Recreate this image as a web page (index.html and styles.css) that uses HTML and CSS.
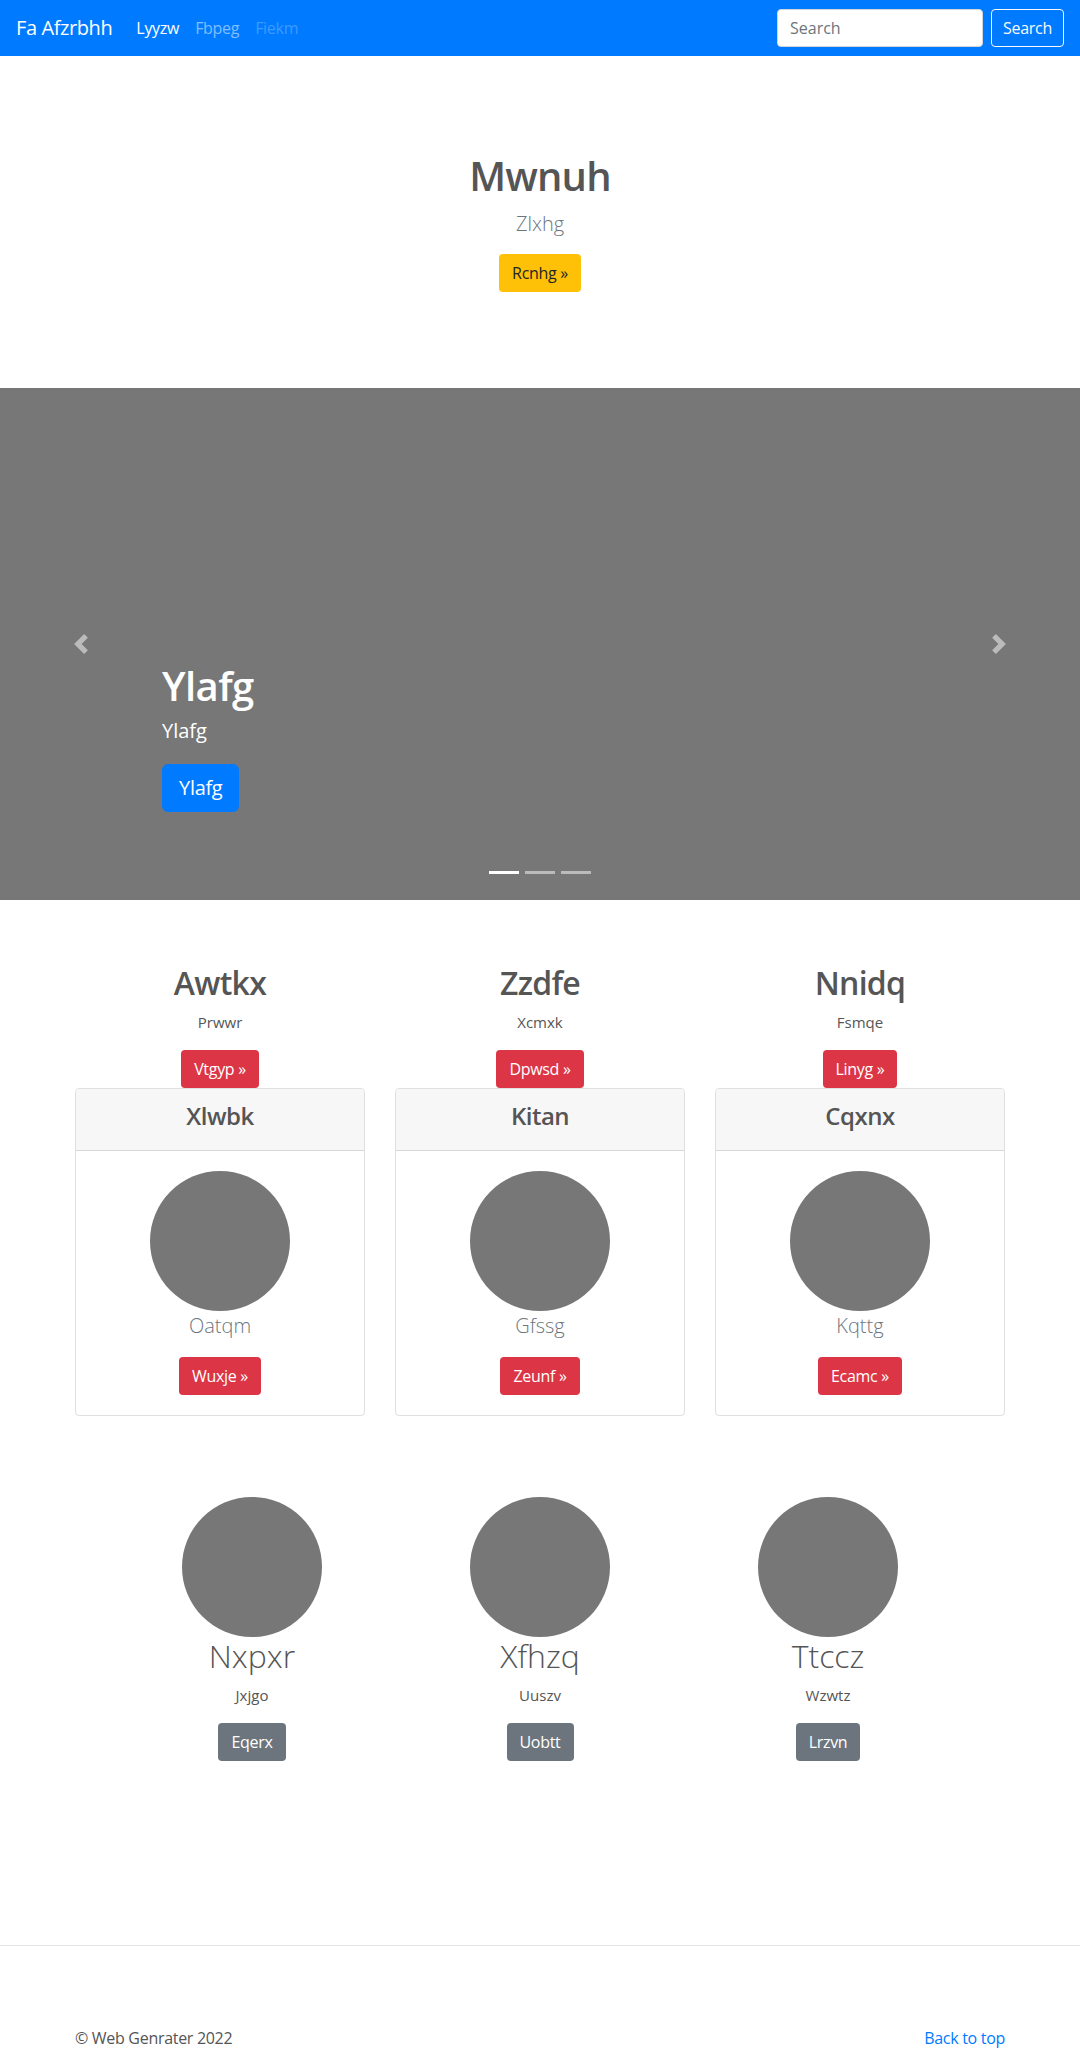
FILE: index.html
```html
<!DOCTYPE html>
<html lang="en">
<head>
<meta charset="utf-8">
<title>Fa Afzrbhh</title>
<link rel="stylesheet" href="styles.css">
</head>
<body>
<header class="navbar">
  <a class="brand" href="#">Fa Afzrbhh</a>
  <ul class="nav">
    <li><a class="nav-link active" href="#">Lyyzw</a></li>
    <li><a class="nav-link" href="#">Fbpeg</a></li>
    <li><a class="nav-link disabled" href="#">Fiekm</a></li>
  </ul>
  <form class="search">
    <input class="search-input" type="text" placeholder="Search">
    <button class="search-btn" type="button">Search</button>
  </form>
</header>

<section class="hero">
  <h1 class="hero-title">Mwnuh</h1>
  <p class="lead hero-lead">Zlxhg</p>
  <a class="btn btn-warning" href="#">Rcnhg &raquo;</a>
</section>

<section class="carousel">
  <ol class="indicators">
    <li class="active"></li>
    <li></li>
    <li></li>
  </ol>
  <a class="control control-prev" href="#">
    <svg class="control-icon" viewBox="0 0 8 8" width="20" height="20"><path d="M5.25 0l-4 4 4 4 1.5-1.5L4.25 4l2.5-2.5L5.25 0z" fill="#fff"/></svg>
  </a>
  <div class="caption">
    <h1 class="caption-title">Ylafg</h1>
    <p class="caption-text">Ylafg</p>
    <a class="btn btn-lg btn-primary" href="#">Ylafg</a>
  </div>
  <a class="control control-next" href="#">
    <svg class="control-icon" viewBox="0 0 8 8" width="20" height="20"><path d="M2.75 0l-1.5 1.5L3.75 4l-2.5 2.5L2.75 8l4-4-4-4z" fill="#fff"/></svg>
  </a>
</section>

<section class="marketing">
  <div class="col">
    <h2 class="m-title">Awtkx</h2>
    <p class="m-text">Prwwr</p>
    <a class="btn btn-danger" href="#">Vtgyp &raquo;</a>
    <div class="card">
      <div class="card-header"><h4 class="card-title">Xlwbk</h4></div>
      <div class="card-body">
        <div class="circle"></div>
        <p class="lead card-lead">Oatqm</p>
        <a class="btn btn-danger" href="#">Wuxje &raquo;</a>
      </div>
    </div>
  </div>
  <div class="col">
    <h2 class="m-title">Zzdfe</h2>
    <p class="m-text">Xcmxk</p>
    <a class="btn btn-danger" href="#">Dpwsd &raquo;</a>
    <div class="card">
      <div class="card-header"><h4 class="card-title">Kitan</h4></div>
      <div class="card-body">
        <div class="circle"></div>
        <p class="lead card-lead">Gfssg</p>
        <a class="btn btn-danger" href="#">Zeunf &raquo;</a>
      </div>
    </div>
  </div>
  <div class="col">
    <h2 class="m-title">Nnidq</h2>
    <p class="m-text">Fsmqe</p>
    <a class="btn btn-danger" href="#">Linyg &raquo;</a>
    <div class="card">
      <div class="card-header"><h4 class="card-title">Cqxnx</h4></div>
      <div class="card-body">
        <div class="circle"></div>
        <p class="lead card-lead">Kqttg</p>
        <a class="btn btn-danger" href="#">Ecamc &raquo;</a>
      </div>
    </div>
  </div>
</section>

<section class="featured">
  <div class="f-col">
    <div class="circle"></div>
    <h2 class="f-title">Nxpxr</h2>
    <p class="f-text">Jxjgo</p>
    <a class="btn btn-secondary" href="#">Eqerx</a>
  </div>
  <div class="f-col">
    <div class="circle"></div>
    <h2 class="f-title">Xfhzq</h2>
    <p class="f-text">Uuszv</p>
    <a class="btn btn-secondary" href="#">Uobtt</a>
  </div>
  <div class="f-col">
    <div class="circle"></div>
    <h2 class="f-title">Ttccz</h2>
    <p class="f-text">Wzwtz</p>
    <a class="btn btn-secondary" href="#">Lrzvn</a>
  </div>
</section>

<hr class="divider">

<footer class="footer">
  <p class="copy">&copy; Web Genrater 2022</p>
  <p class="to-top"><a href="#">Back to top</a></p>
</footer>
</body>
</html>
```

FILE: styles.css
```css
* { box-sizing: border-box; }

body {
  margin: 0;
  font-family: "Open Sans", "Noto Sans", "Liberation Sans", sans-serif;
  font-size: 16px;
  line-height: 1.5;
  color: #555;
  background: #fff;
}

a { text-decoration: none; }

/* Navbar */
.navbar {
  display: flex;
  align-items: center;
  height: 56px;
  padding: 0 16px;
  background: #007bff;
}
.brand {
  font-size: 20px;
  line-height: 30px;
  letter-spacing: -0.4px;
  color: #fff;
  margin-right: 16px;
}
.nav {
  display: flex;
  list-style: none;
  margin: 0;
  padding: 0;
}
.nav-link {
  display: block;
  padding: 8px;
  letter-spacing: -0.3px;
  color: rgba(255,255,255,.5);
}
.nav-link.active { color: #fff; }
.nav-link.disabled { color: rgba(255,255,255,.25); }
.search {
  margin-left: auto;
  display: flex;
  gap: 8px;
}
.search-input {
  width: 206px;
  height: 38px;
  padding: 6px 12px;
  font: inherit;
  font-size: 16px;
  color: #495057;
  border: 1px solid #ced4da;
  border-radius: 4px;
  background: #fff;
}
.search-input::placeholder { color: #6c757d; }
.search-btn {
  width: 73px;
  height: 38px;
  padding: 6px 0;
  font: inherit;
  font-size: 16px;
  line-height: 24px;
  letter-spacing: -0.3px;
  color: #f8f9fa;
  background: transparent;
  border: 1px solid #f8f9fa;
  border-radius: 4px;
}

/* Buttons */
.btn {
  display: inline-block;
  padding: 6px 12px;
  font-size: 16px;
  line-height: 24px;
  letter-spacing: -0.3px;
  border: 1px solid transparent;
  border-radius: 4px;
  text-align: center;
}
.btn-lg {
  padding: 8px 16px;
  font-size: 20px;
  line-height: 30px;
  border-radius: 6px;
}
.btn-warning { background: #ffc107; color: #212529; }
.btn-primary { background: #007bff; color: #fff; }
.btn-danger { background: #dc3545; color: #fff; }
.btn-secondary { background: #6c757d; color: #fff; }

.lead {
  font-size: 20px;
  font-weight: 300;
  line-height: 30px;
}

/* Hero */
.hero {
  padding: 96px 0;
  text-align: center;
}
.hero-title {
  margin: 0 0 9px;
  font-size: 40px;
  font-weight: 600;
  line-height: 48px;
  letter-spacing: -0.8px;
}
.hero-lead {
  margin: 0 0 15px;
  color: #6c757d;
}

/* Carousel */
.carousel {
  position: relative;
  height: 512px;
  background: #777;
}
.indicators {
  position: absolute;
  left: 0;
  right: 0;
  bottom: 26px;
  display: flex;
  justify-content: center;
  list-style: none;
  margin: 0;
  padding: 0;
}
.indicators li {
  width: 30px;
  height: 3px;
  margin: 0 3px;
  background: #fff;
  opacity: .5;
}
.indicators li.active { opacity: 1; }
.control {
  position: absolute;
  top: 0;
  bottom: 0;
  width: 15%;
  display: flex;
  align-items: center;
  justify-content: center;
  opacity: .5;
}
.control-prev { left: 0; }
.control-next { right: 0; }
.control-icon { display: block; }
.caption {
  position: absolute;
  left: 15%;
  right: 15%;
  bottom: 88px;
  color: #fff;
  text-align: left;
}
.caption-title {
  margin: 0 0 6px;
  font-size: 40px;
  font-weight: 600;
  line-height: 48px;
  letter-spacing: -0.6px;
}
.caption-text {
  margin: 0 0 18px;
  font-size: 20px;
  line-height: 30px;
}

/* Marketing */
.marketing {
  width: 930px;
  margin: 64px auto 0;
  display: grid;
  grid-template-columns: repeat(3, 1fr);
  column-gap: 30px;
}
.col { text-align: center; }
.m-title {
  margin: 0 0 8px;
  font-size: 32px;
  font-weight: 600;
  line-height: 38px;
  letter-spacing: -0.7px;
}
.m-text {
  margin: 0 0 16px;
  font-size: 15px;
  line-height: 24px;
}
.card {
  text-align: center;
  border: 1px solid rgba(0,0,0,.125);
  border-radius: 4px;
  overflow: hidden;
}
.card-header {
  padding: 12px 20px;
  background: #f7f7f7;
  border-bottom: 1px solid rgba(0,0,0,.125);
}
.card-title {
  margin: 0 0 8px;
  font-size: 24px;
  font-weight: 600;
  line-height: 29px;
  letter-spacing: -0.5px;
}
.card-body { padding: 20px; }
.card-lead {
  margin: 0 0 16px;
  color: #6c757d;
}
.circle {
  width: 140px;
  height: 140px;
  margin: 0 auto;
  border-radius: 50%;
  background: #777;
}

/* Featured */
.featured {
  width: 864px;
  margin: 81px auto 0;
  display: grid;
  grid-template-columns: repeat(3, 1fr);
}
.f-col { text-align: center; }
.f-title {
  margin: 0 0 8px;
  font-size: 32px;
  font-weight: 300;
  line-height: 38px;
}
.f-text {
  margin: 0 0 16px;
  font-size: 15px;
  line-height: 24px;
}

/* Footer */
.divider {
  margin: 184px 0 80px;
  border: 0;
  border-top: 1px solid rgba(0,0,0,.1);
}
.footer {
  width: 930px;
  margin: 0 auto;
  display: flex;
  justify-content: space-between;
  letter-spacing: -0.3px;
}
.footer p { margin: 0 0 16px; }
.to-top a { color: #007bff; }
```
